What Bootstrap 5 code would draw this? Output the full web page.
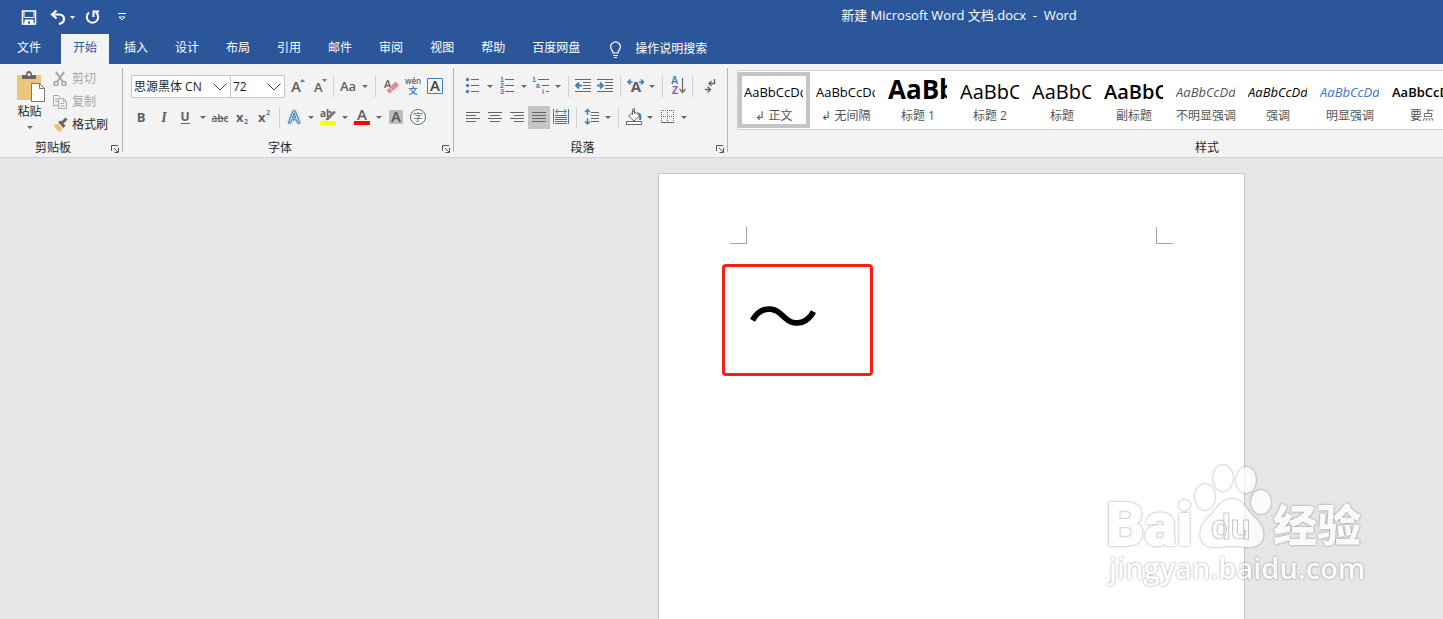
<!DOCTYPE html>
<html lang="zh-CN">
<head>
<meta charset="utf-8">
<meta name="viewport" content="width=device-width, initial-scale=1">
<title>新建 Microsoft Word 文档.docx - Word</title>
<link href="https://cdn.jsdelivr.net/npm/bootstrap@5.3.0/dist/css/bootstrap.min.css" rel="stylesheet">
<style>
  :root { --word-blue: #2b579a; --ribbon: #f3f3f3; --accent: #3f7fbf; }
  body { font: 12px/16px "Open Sans", "Noto Sans CJK SC", sans-serif; color: #262626; background: #e6e6e6; overflow: hidden; }
  button { font: inherit; color: inherit; background: none; border: 0; padding: 0; }
  svg { display: block; fill: none; flex: none; }
  .title-bar, .tab-bar { background: var(--word-blue); color: #fff; }
  .title-bar { height: 34px; }
  .doc-title { margin-left: 348px; padding-bottom: 4px; font-size: 13px; }
  .quick { padding-left: 21px; gap: 12px; }
  .quick .redo { margin-left: -4px; }
  .tab-bar { height: 30px; gap: 3px; padding-left: 5px; }
  .tab-bar .nav-link { color: #fff; padding: 6px 12px 8px; border-radius: 0; line-height: 16px; }
  .tab-bar .nav-link.active { background: var(--ribbon); color: var(--word-blue); }
  .tab-bar .tell-me { gap: 11px; padding-top: 7px; }
  .file-tab { margin-right: 5px; }
  .ribbon { background: var(--ribbon); border-bottom: 1px solid #d2d2d2; height: 94px; }
  .clip-group { width: 122px; }
  .font-group { width: 330px; }
  .para-group { width: 273px; }
  .group-box { padding-top: 11px; }
  .group-line { width: 1px; margin: 4px 0 5px; background: #b4b4b4; flex: none; }
  .group-name { height: 17px; margin-top: 10px; }
  .launch { width: 16px; }
  .tool-rows { gap: 8px; padding-left: 8px; }
  .tool-row { height: 23px; }
  .tool { width: 22px; height: 23px; flex: none; }
  .tool.on { background: #c5c5c5; }
  .drop { width: 12px; height: 23px; flex: none; }
  .drop::after, .paste-arrow::after { content: ""; display: block; margin: auto; width: 0; border: 3px solid transparent; border-top-color: #666; border-bottom: 0; }
  .split { width: 8px; height: 21px; flex: none; border-left: 1px solid #d0d0d0; margin-left: 4px; margin-right: -4px; }
  .combo { height: 23px; border: 1px solid #c6c6c6; border-radius: 0; padding: 0 0 0 2px; color: #1e1e1e; appearance: none; font-size: 12px; line-height: 16px;
    background: #fff url("data:image/svg+xml,%3Csvg xmlns='http://www.w3.org/2000/svg' width='14' height='8'%3E%3Cpath d='M.5 .5l6.500 6.500 6.500-6.500' fill='none' stroke='%23444'/%3E%3C/svg%3E") no-repeat right 3px center; }
  .combo-font { width: 100px; }
  .combo-size { width: 55px; margin-left: -1px; }
  .g { stroke: #666; } .b { stroke: var(--accent); } .gf { fill: #5f5f5f; } .bf { fill: var(--accent); }
  .tool text { font-family: "Open Sans", "Noto Sans CJK SC", sans-serif; }
  .tool .digits { font: 700 7px "Liberation Sans", sans-serif; }
  .tool .sort-letter { font: 700 10px "Liberation Sans", sans-serif; }
  .tool .slanted { font: italic 700 14px "Liberation Serif", serif; }
  .tool .glow { filter: drop-shadow(0 0 1px #7fb2e0); }
  .clip-box { padding: 3px 0 0 7px; height: 75px; }
  .paste { width: 45px; padding-top: 3px; }
  .paste-arrow { padding-top: 6px; }
  .clip-item { height: 23px; gap: 4px; }
  .clip-item:disabled { color: #a6a6a6; }
  .clip-group .group-name { margin-top: 0; }
  .styles-box { min-width: 958px; padding-top: 6px; flex: 1; }
  .gallery { background: #fff; border: 1px solid #d2d2d2; height: 60px; margin-left: 9px; }
  .style-item { width: 72px; height: 58px; flex: none; padding: 0 6px 3px; }
  .style-item.on { border: 4px solid #c5c5c5; padding: 0 2px; height: 56px; margin-top: 1px; }
  .style-item .sample { display: block; height: 32px; line-height: 38px; font-size: 13px; color: #000; overflow: hidden; white-space: nowrap; text-align: left; width: 59px; }
  .style-item .name { display: block; margin-top: 3px; color: #555; white-space: nowrap; }
  .style-item.on .sample { margin-top: -3px; }
  .style-item .s-h1 { font-size: 26px; font-weight: 700; line-height: 32px; }
  .style-item .s-h2 { font-size: 20px; line-height: 37px; }
  .style-item .s-sub { font-size: 20px; font-weight: 600; line-height: 37px; }
  .style-item .s-soft { font-style: italic; color: #555; }
  .style-item .s-em { font-style: italic; }
  .style-item .s-strong-em { font-style: italic; color: #4472c4; }
  .style-item .s-key { font-weight: 600; }
  .desk { padding-top: 15px; }
  .paper { width: 587px; min-height: calc(100vh - 173px); margin-left: 45.6%; background: #fff; border: 1px solid #c6c6c6; border-bottom: 0; padding-top: 53px; }
  .margins { padding: 0 71px; }
  .corner { width: 17px; height: 17px; border: 0 solid #a5a5a5; border-bottom-width: 1px; border-right-width: 1px; }
  .corner + .corner { border-right-width: 0; border-left-width: 1px; }
  .highlight { width: 151px; height: 112px; border: 3px solid #fb1f13; border-radius: 4px; margin: 20px 0 0 63px; padding-left: 22px; }
  .wave { font: 72px/90px "Noto Sans CJK SC", sans-serif; color: #000; margin: 0; }
  .watermark { position: absolute; right: 66px; bottom: 24px; filter: drop-shadow(0 0 1px rgba(0,0,0,.5)); }
</style>
</head>
<body>
<header>
  <div class="title-bar d-flex align-items-center">
    <div class="quick d-flex align-items-center">
      <button aria-label="保存"><svg width="17" height="17" viewBox="0 0 17 17" stroke="#fff"><path d="M1.500 2v13h13v-13z" stroke-width="1.500"/><path d="M3 2.500v5q0 1 1 1h8q1 0 1-1v-5" /><path d="M4 15v-4h8v4z" fill="#fff"/><path d="M7 12.500h2v2H7z" fill="#2b579a" stroke="none"/></svg></button>
      <button aria-label="撤消"><svg width="26" height="17" viewBox="0 0 26 17"><path d="M2 5.500h7q5 .5 5 4.500 0 4-5 5" stroke="#fff" stroke-width="2.200"/><path d="M6.500 1.500L2 5.500l4.500 4" stroke="#fff" stroke-width="2.200"/><path d="M20 7h5l-2.500 3z" fill="#fff"/></svg></button>
      <button class="redo" aria-label="恢复"><svg width="17" height="17" viewBox="0 0 17 17" stroke="#fff" stroke-width="2"><path d="M5 3.500A5.700 5.700 0 1 0 12 3.500"/><path d="M9.500 8V2.500H15"/></svg></button>
      <button class="ms-1" aria-label="自定义快速访问工具栏"><svg width="10" height="9" viewBox="0 0 10 9" stroke="#fff"><path d="M1 .500h8M2 4l3 3 3-3z"/></svg></button>
    </div>
    <div class="doc-title flex-grow-1 text-center">新建 Microsoft Word 文档.docx&nbsp; -&nbsp; Word</div>
  </div>
  <nav class="tab-bar nav flex-nowrap" aria-label="功能区选项卡">
    <a class="nav-link file-tab" href="#">文件</a>
    <a class="nav-link active" href="#">开始</a>
    <a class="nav-link" href="#">插入</a>
    <a class="nav-link" href="#">设计</a>
    <a class="nav-link" href="#">布局</a>
    <a class="nav-link" href="#">引用</a>
    <a class="nav-link" href="#">邮件</a>
    <a class="nav-link" href="#">审阅</a>
    <a class="nav-link" href="#">视图</a>
    <a class="nav-link" href="#">帮助</a>
    <a class="nav-link" href="#">百度网盘</a>
    <a class="nav-link tell-me d-flex" href="#"><svg width="17" height="18" viewBox="0 0 17 18" stroke="#fff"><path d="M6 12q0-2-1.500-3.500A4.800 4.800 0 1 1 12.500 8.500Q11 10 11 12z" stroke-width="1.200"/><path d="M6 14.500h5M7 16.500h3"/></svg><span>操作说明搜索</span></a>
  </nav>
</header>

<section class="ribbon d-flex overflow-hidden">
  <div class="clip-group d-flex flex-column flex-shrink-0">
    <div class="clip-box d-flex">
      <button class="paste d-flex flex-column align-items-center">
        <svg width="30" height="34" viewBox="0 0 30 34"><path d="M2 5h24v25H2z" fill="#ecc57d"/><path d="M7 9V5h4q0-4 3-4t3 4h4v4z" fill="#666"/><circle cx="14" cy="4.500" r="1.500" fill="#f3f3f3"/><path d="M16.500 13.500h8l5 5v13h-13z" fill="#fff" stroke="#777"/><path d="M24.500 13.500v5h5" stroke="#777"/></svg>
        <span>粘贴</span><span class="paste-arrow"></span>
      </button>
      <div class="d-flex flex-column">
        <button class="clip-item d-flex align-items-center" disabled><svg width="16" height="16" viewBox="0 0 16 16" stroke="#a6a6a6" stroke-width="2"><path d="M4 1l7 10M12 1L5 11"/><circle cx="4" cy="12.500" r="2" stroke-width="1.500"/><circle cx="12" cy="12.500" r="2" stroke-width="1.500"/></svg>剪切</button>
        <button class="clip-item d-flex align-items-center" disabled><svg width="16" height="16" viewBox="0 0 16 16" stroke="#b0a8b0"><path d="M7 11.500H1.500v-10h5l2 2M3 5h3M3 7.500h3"/><path d="M6.500 4.500h5l3 3v7h-8zM11.500 4.500v3h3M8.500 9.500h4M8.500 12h4"/></svg>复制</button>
        <button class="clip-item d-flex align-items-center"><svg width="16" height="16" viewBox="0 0 16 16"><path d="M1 7.500q3 .5 5-1l5 5-3 3.500q-3-1-7-7.500z" fill="#ecc57d"/><path d="M6 5l2.500-1.500 5 5-2 2.500z" fill="#666"/><path d="M10 6l4.500-4.500" stroke="#666" stroke-width="3"/></svg>格式刷</button>
      </div>
    </div>
    <div class="group-name d-flex align-items-center"><span class="flex-grow-1 text-center">剪贴板</span><button class="launch" aria-label="剪贴板选项"><svg width="16" height="12" viewBox="0 0 16 12" stroke="#555"><path d="M5.500 9V3.500H12M8 6l4 4M12.500 6v4.500H8.500"/></svg></button></div>
  </div>
  <div class="group-line"></div>

  <div class="font-group group-box flex-shrink-0">
    <div class="tool-rows d-flex flex-column">
      <div class="tool-row d-flex align-items-center">
        <select class="combo combo-font" aria-label="字体"><option>思源黑体 CN</option></select>
        <select class="combo combo-size" aria-label="字号"><option>72</option></select>
        <button class="tool" aria-label="增大字号"><svg width="22" height="23"><text class="gf" x="6" y="17" font-size="15" font-weight="600">A</text><path class="bf" d="M15 7h5l-2.500-3z"/></svg></button>
        <button class="tool" aria-label="减小字号"><svg width="22" height="23"><text class="gf" x="7" y="17" font-size="13" font-weight="600">A</text><path class="bf" d="M15 4h5l-2.500 3z"/></svg></button>
        <span class="split"></span>
        <button class="tool" aria-label="更改大小写"><svg width="22" height="23"><text class="gf" x="3" y="16" font-size="13" font-weight="600">Aa</text></svg></button><button class="drop" aria-label="大小写选项"></button>
        <span class="split"></span>
        <button class="tool" aria-label="清除所有格式"><svg width="22" height="23"><text class="gf" x="5" y="13" font-size="11" font-weight="600">A</text><path d="M8 15l8-8q1-.5 2 .5l1.500 2q.5 1 0 1.500l-8 7H10l-2-2z" fill="#e88a9c"/><path d="M10.500 12.500l3.500 4" stroke="#f8dfe3"/></svg></button>
        <button class="tool" aria-label="拼音指南"><svg width="22" height="23"><text class="gf" x="12" y="9" font-size="8" font-weight="600" text-anchor="middle">wén</text><text class="bf" x="12" y="19" font-size="9" font-weight="700" text-anchor="middle">文</text></svg></button>
        <button class="tool" aria-label="字符边框"><svg width="22" height="23"><path class="b" d="M4.500 3.500h15v15h-15z"/><text fill="#444" x="12" y="16" font-size="15" font-weight="600" text-anchor="middle">A</text></svg></button>
      </div>
      <div class="tool-row d-flex align-items-center">
        <button class="tool" aria-label="加粗"><svg width="22" height="23"><text class="gf" x="10" y="16" font-size="13" font-weight="700" text-anchor="middle">B</text></svg></button>
        <button class="tool" aria-label="倾斜"><svg width="22" height="23"><text class="gf slanted" x="11" y="16" text-anchor="middle">I</text></svg></button>
        <button class="tool" aria-label="下划线"><svg width="22" height="23"><text class="gf" x="10" y="15" font-size="12" font-weight="700" text-anchor="middle">U</text><path class="g" d="M6 17.500h9"/></svg></button><button class="drop" aria-label="下划线选项"></button>
        <button class="tool" aria-label="删除线"><svg width="22" height="23"><text class="gf" x="11" y="16" font-size="10" font-weight="600" text-anchor="middle">abc</text><path class="g" d="M3 12.500h16"/></svg></button>
        <button class="tool" aria-label="下标"><svg width="22" height="23"><text class="gf" x="5" y="16" font-size="13" font-weight="700">x</text><text class="bf" x="13" y="18" font-size="7" font-weight="700">2</text></svg></button>
        <button class="tool" aria-label="上标"><svg width="22" height="23"><text class="gf" x="5" y="16" font-size="13" font-weight="700">x</text><text class="bf" x="13" y="9" font-size="7" font-weight="700">2</text></svg></button>
        <span class="split"></span>
        <button class="tool" aria-label="文本效果"><svg width="22" height="23"><text class="b glow" fill="#fff" x="11" y="17" font-size="17" font-weight="600" text-anchor="middle">A</text></svg></button><button class="drop" aria-label="文本效果选项"></button>
        <button class="tool" aria-label="突出显示"><svg width="22" height="23"><text class="gf" x="3" y="11" font-size="10" font-weight="700">ab</text><path d="M12 13.500l7-7" stroke="#f3f3f3" stroke-width="4"/><path d="M10.500 13l7.500-7.500" stroke="#777" stroke-width="2.500"/><path d="M3 15h16v4H3z" fill="#ff0"/><path d="M8 14.500l2-3 2 2z" fill="#666"/></svg></button><button class="drop" aria-label="突出显示颜色"></button>
        <button class="tool" aria-label="字体颜色"><svg width="22" height="23"><text class="gf" x="11" y="14" font-size="15" font-weight="600" text-anchor="middle">A</text><path d="M3 15h16v4H3z" fill="red"/></svg></button><button class="drop" aria-label="字体颜色选项"></button>
        <button class="tool" aria-label="字符底纹"><svg width="22" height="23"><path d="M4 4h14v14H4z" fill="#bdbdbd"/><text fill="#555" x="11" y="16" font-size="15" font-weight="600" text-anchor="middle">A</text></svg></button>
        <button class="tool" aria-label="带圈字符"><svg width="22" height="23"><circle class="g" cx="11" cy="11" r="7.500" fill="#fff"/><text class="gf" x="11" y="15" font-size="10" text-anchor="middle">字</text></svg></button>
      </div>
    </div>
    <div class="group-name d-flex align-items-center"><span class="flex-grow-1 text-center">字体</span><button class="launch" aria-label="字体选项"><svg width="16" height="12" viewBox="0 0 16 12" stroke="#555"><path d="M5.500 9V3.500H12M8 6l4 4M12.500 6v4.500H8.500"/></svg></button></div>
  </div>
  <div class="group-line"></div>

  <div class="para-group group-box flex-shrink-0">
    <div class="tool-rows d-flex flex-column">
      <div class="tool-row d-flex align-items-center">
        <button class="tool" aria-label="项目符号"><svg width="22" height="23"><path class="g" d="M9 4.500h8M9 10.500h8M9 16.500h8"/><g class="bf"><circle cx="5.500" cy="4.500" r="1.700"/><circle cx="5.500" cy="10.500" r="1.700"/><circle cx="5.500" cy="16.500" r="1.700"/></g></svg></button><button class="drop" aria-label="项目符号库"></button>
        <button class="tool" aria-label="编号"><svg width="22" height="23"><path class="g" d="M9 4.500h9M9 10.500h9M9 16.500h9"/><g class="bf"><text class="digits" x="4" y="7">1</text><text class="digits" x="4" y="13">2</text><text class="digits" x="4" y="19">3</text></g></svg></button><button class="drop" aria-label="编号库"></button>
        <button class="tool" aria-label="多级列表"><svg width="22" height="23"><path class="g" d="M8 4.500h11M12 10.500h7M16 16.500h3"/><g class="bf"><text class="digits" x="2" y="7">1</text><text class="digits" x="6" y="13">a</text><text class="digits" x="12" y="19">i</text></g></svg></button><button class="drop" aria-label="多级列表库"></button>
        <span class="split"></span>
        <button class="tool" aria-label="减少缩进量"><svg width="22" height="23"><path class="g" d="M3 4.500h16M11 7.500h8M11 10.500h8M11 13.500h8M3 16.500h16"/><path class="b" d="M4 10.500h6M7 7.500l-3 3 3 3" stroke-width="1.800"/></svg></button>
        <button class="tool" aria-label="增加缩进量"><svg width="22" height="23"><path class="g" d="M3 4.500h16M11 7.500h8M11 10.500h8M11 13.500h8M3 16.500h16"/><path class="b" d="M3 10.500h6M6 7.500l3 3-3 3" stroke-width="1.800"/></svg></button>
        <span class="split"></span>
        <button class="tool" aria-label="中文版式"><svg width="22" height="23"><text class="gf" x="12" y="17" font-size="15" font-weight="700" text-anchor="middle">A</text><path class="b" d="M4 7h4.500M6.500 4.500L4 7l2.500 2.500M15 7h4.500M17 4.500L19.500 7 17 9.500" stroke-width="1.500"/></svg></button><button class="drop" aria-label="中文版式选项"></button>
        <span class="split"></span>
        <button class="tool" aria-label="排序"><svg width="22" height="23"><text class="bf sort-letter" x="5" y="9">A</text><text class="sort-letter" x="6" y="19" fill="#8e52b5">Z</text><path class="g" d="M16.500 3v14M13.500 14l3 3.500 3-3.500" stroke-width="1.200"/></svg></button>
        <span class="split"></span>
        <button class="tool" aria-label="显示编辑标记"><svg width="22" height="23"><path class="g" d="M18.500 4v4.500h-5.500M15.500 6L13 8.500l2.500 2.500M9 14.500h5M11.500 11.500l3 3-3 3" stroke-width="1.400"/></svg></button>
      </div>
      <div class="tool-row d-flex align-items-center">
        <button class="tool" aria-label="左对齐"><svg width="22" height="23"><path class="g" d="M4 6.500h14M4 9.500h10M4 12.500h14M4 15.500h10"/></svg></button>
        <button class="tool" aria-label="居中"><svg width="22" height="23"><path class="g" d="M4 6.500h14M6 9.500h10M4 12.500h14M6 15.500h10"/></svg></button>
        <button class="tool" aria-label="右对齐"><svg width="22" height="23"><path class="g" d="M4 6.500h14M8 9.500h10M4 12.500h14M8 15.500h10"/></svg></button>
        <button class="tool on" aria-label="两端对齐" aria-pressed="true"><svg width="22" height="23"><path class="g" d="M4 6.500h14M4 9.500h14M4 12.500h14M4 15.500h14"/></svg></button>
        <button class="tool" aria-label="分散对齐"><svg width="22" height="23"><path class="b" d="M3.500 3v15M18.500 3v15M6 5.500h10M8 3L5.500 5.500 8 8M14 3l2.500 2.500L14 8"/><path class="g" d="M5 9.500h12M5 11.500h12M5 13.500h12M5 15.500h12M5 17.500h12"/></svg></button>
        <span class="split"></span>
        <button class="tool" aria-label="行和段落间距"><svg width="22" height="23"><path class="g" d="M11 6.500h8M11 9.500h8M11 12.500h8M11 15.500h8"/><path class="b" d="M7.500 3.500V9M5 6l2.500-2.500L10 6M7.500 12v6M5 15.500L7.500 18l2.500-2.500" stroke-width="1.500"/></svg></button><button class="drop" aria-label="间距选项"></button>
        <span class="split"></span>
        <button class="tool" aria-label="底纹"><svg width="22" height="23"><path class="g" d="M6.500 10l5.500-5 5.500 5-5.500 5zM10.500 9V4q0-1.500 2-1.500V8" fill="#fff"/><path d="M15 6q6 1 4 8h-2q1-4-2-8z" class="bf"/><path class="g" d="M4.500 15.500h15v3h-15z" fill="#fff"/></svg></button><button class="drop" aria-label="底纹颜色"></button>
        <button class="tool" aria-label="边框"><svg width="22" height="23"><path class="g" d="M5 4.500h13M5 10.500h13M5.500 4v13M11.500 4v13M17.500 4v13" stroke-dasharray="1 1"/><path class="g" d="M5 16.500h13"/></svg></button><button class="drop" aria-label="边框选项"></button>
      </div>
    </div>
    <div class="group-name d-flex align-items-center"><span class="flex-grow-1 text-center">段落</span><button class="launch" aria-label="段落选项"><svg width="16" height="12" viewBox="0 0 16 12" stroke="#555"><path d="M5.500 9V3.500H12M8 6l4 4M12.500 6v4.500H8.500"/></svg></button></div>
  </div>
  <div class="group-line"></div>

  <div class="styles-box">
    <div class="gallery d-flex">
      <button class="style-item on"><span class="sample">AaBbCcDd</span><span class="name">↲ 正文</span></button>
      <button class="style-item"><span class="sample">AaBbCcDd</span><span class="name">↲ 无间隔</span></button>
      <button class="style-item"><span class="sample s-h1">AaBb</span><span class="name">标题 1</span></button>
      <button class="style-item"><span class="sample s-h2">AaBbC</span><span class="name">标题 2</span></button>
      <button class="style-item"><span class="sample s-h2">AaBbC</span><span class="name">标题</span></button>
      <button class="style-item"><span class="sample s-sub">AaBbC</span><span class="name">副标题</span></button>
      <button class="style-item"><span class="sample s-soft">AaBbCcDd</span><span class="name">不明显强调</span></button>
      <button class="style-item"><span class="sample s-em">AaBbCcDd</span><span class="name">强调</span></button>
      <button class="style-item"><span class="sample s-strong-em">AaBbCcDd</span><span class="name">明显强调</span></button>
      <button class="style-item"><span class="sample s-key">AaBbCcDd</span><span class="name">要点</span></button>
    </div>
    <div class="group-name text-center">样式</div>
  </div>
</section>

<main class="desk">
  <article class="paper">
    <div class="margins d-flex justify-content-between">
      <span class="corner"></span>
      <span class="corner"></span>
    </div>
    <div class="highlight"><p class="wave">～</p></div>
  </article>
</main>

<svg class="watermark" width="270" height="136" viewBox="0 0 270 136" opacity=".8" role="img" aria-label="Baidu经验 jingyan.baidu.com">
  <g fill="#fff">
    <text x="-1" y="86" font-family="Roboto, sans-serif" font-weight="700" font-size="60" stroke="#fff" stroke-width="2">Bai</text>
    <ellipse cx="98" cy="38" rx="10" ry="13"/><ellipse cx="116" cy="19" rx="10" ry="13"/><ellipse cx="139" cy="21" rx="10" ry="13"/><ellipse cx="154" cy="43" rx="10" ry="12"/>
    <path d="M125 40c12 0 14 12 24 20 10 9 11 26-4 28-8 1-12-1-20-1s-13 2-21 1c-14-2-13-19-4-28 9-8 13-20 25-20z"/>
    <text x="104" y="80" font-family="Roboto, sans-serif" font-weight="700" font-size="35" stroke="#bbb">du</text>
    <text x="166" y="83" font-family="'Noto Sans CJK SC', sans-serif" font-weight="900" font-size="44">经验</text>
    <text x="2" y="120" font-family="'Open Sans', sans-serif" font-size="29" font-weight="600">jingyan.baidu.com</text>
  </g>
</svg>
<script src="https://cdn.jsdelivr.net/npm/bootstrap@5.3.0/dist/js/bootstrap.bundle.min.js"></script>
</body>
</html>
